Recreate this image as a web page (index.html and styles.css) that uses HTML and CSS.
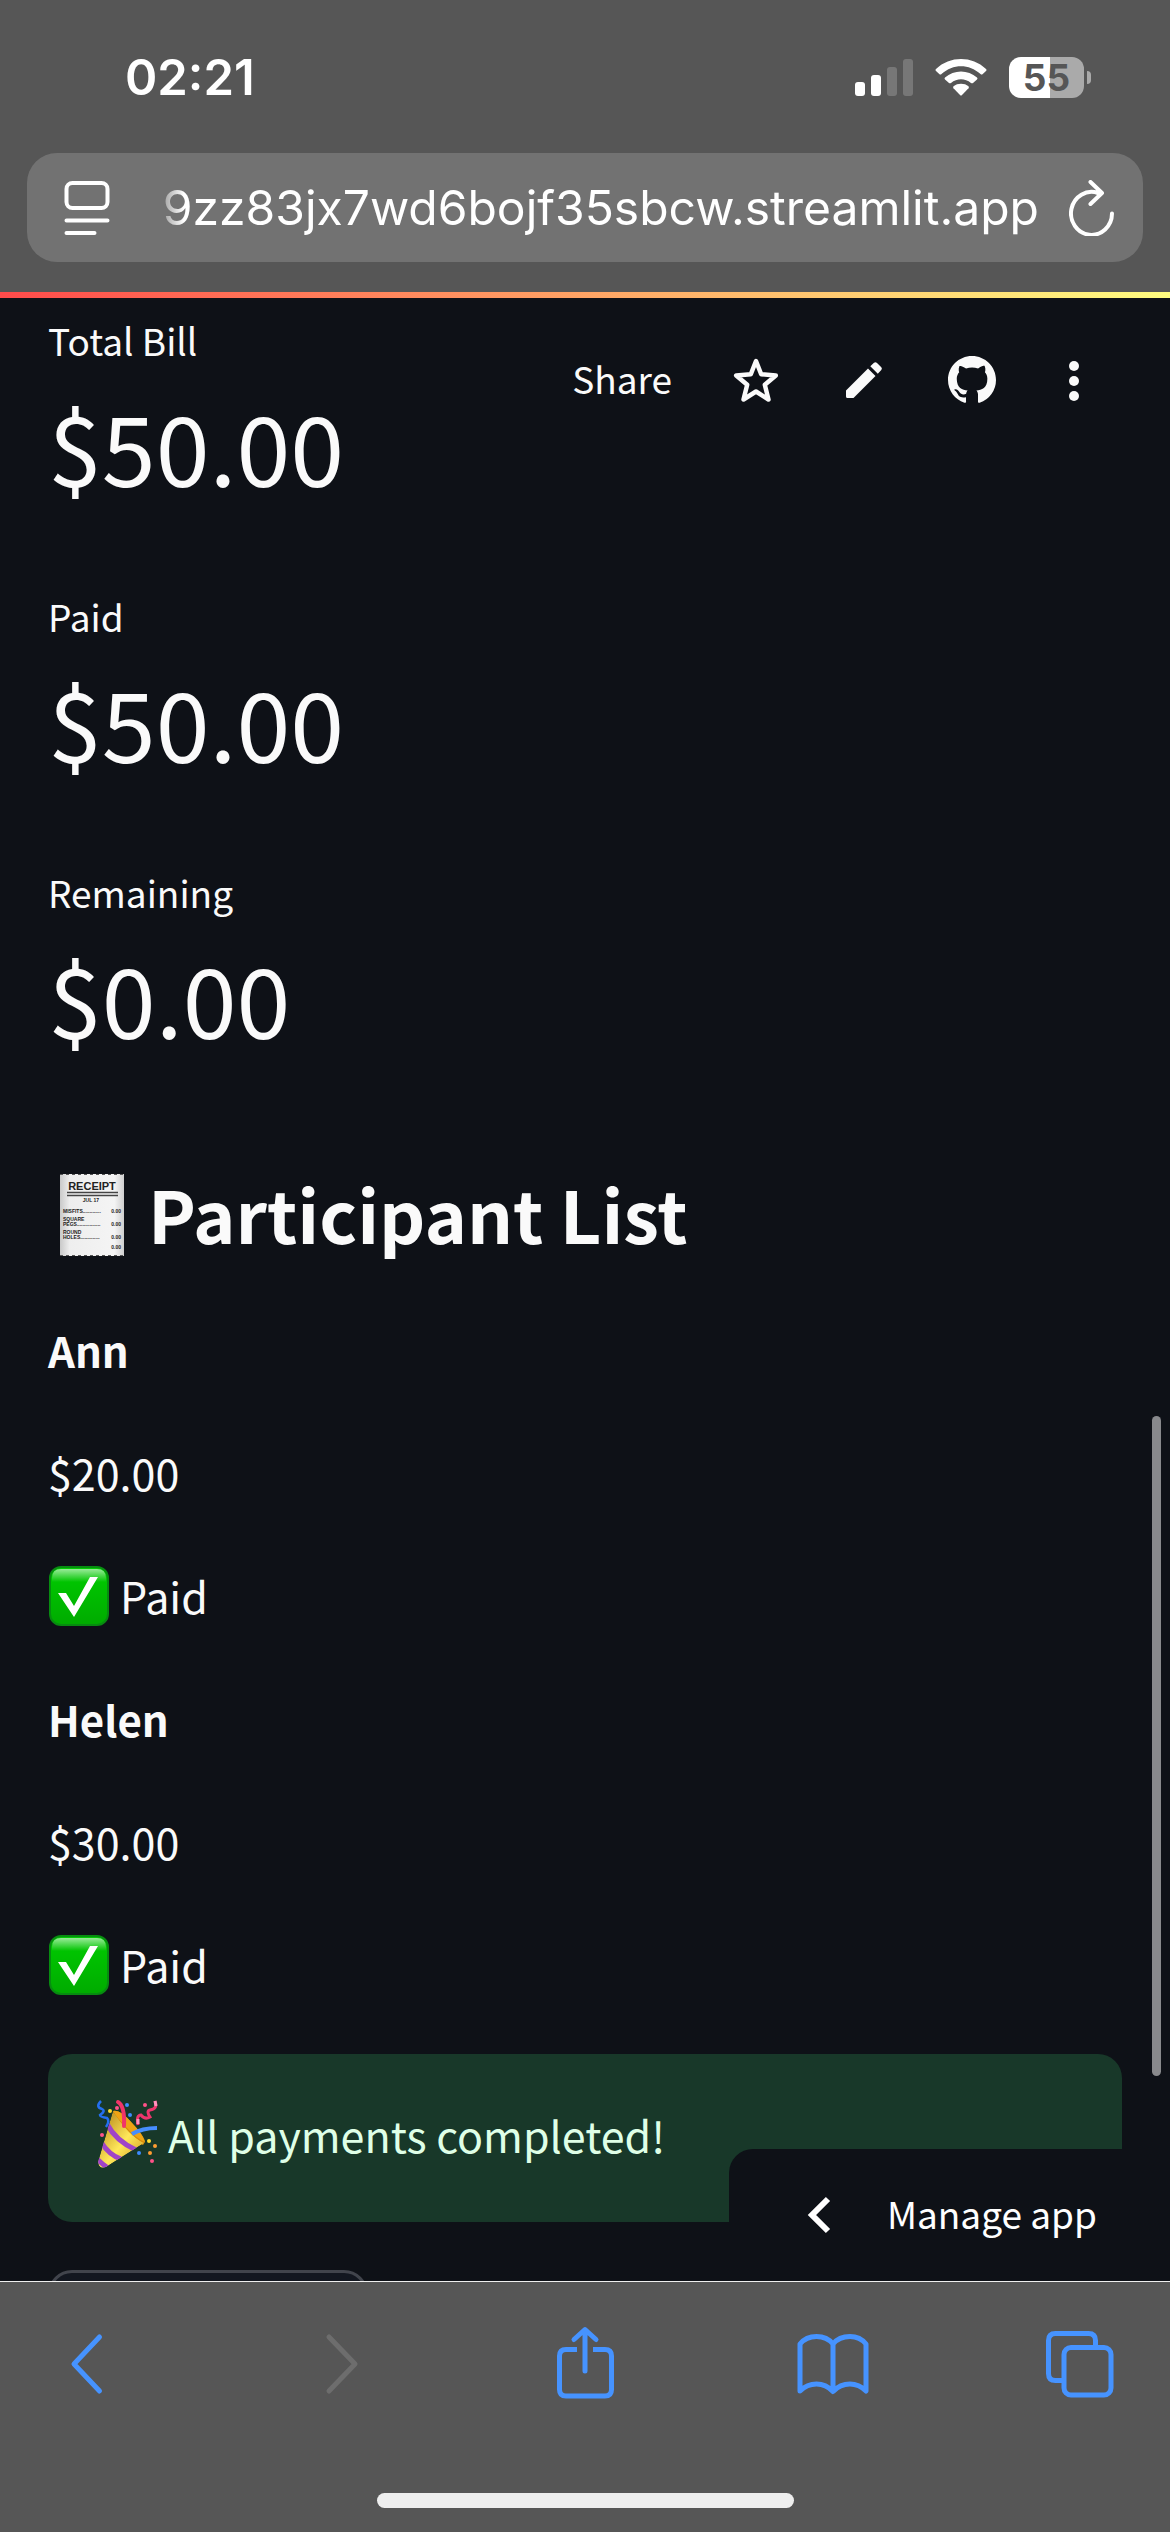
FILE: index.html
```html
<!DOCTYPE html>
<html lang="en">
<head>
<meta charset="utf-8">
<meta name="viewport" content="width=device-width, initial-scale=1">
<title>Bill Splitter</title>
<link rel="stylesheet" href="styles.css">
</head>
<body>
<header class="chrome-top">
  <div class="status">
    <time class="clock">02:21</time>
    <div class="status-icons">
      <svg width="58" height="42" viewBox="0 0 58 42" fill="#fff" role="img" aria-label="Signal">
        <rect x="0" y="25" width="10" height="14" rx="3"/>
        <rect x="16" y="18" width="10" height="21" rx="3"/>
        <g fill="#777"><rect x="32" y="10" width="10" height="29" rx="3"/><rect x="48" y="2" width="10" height="37" rx="3"/></g>
      </svg>
      <svg width="52" height="42" viewBox="0 0 52 42" fill="#fff" role="img" aria-label="Wi-Fi">
        <path d="M1 12C15 -1.300 37 -1.300 51 12Q52 13 51 14L47.500 17.200Q46.500 18 45.500 17C34 6.500 18 6.500 6.500 17Q5.500 18 4.500 17.200L1 14Q0 13 1 12Z"/>
        <path d="M10 20.500C19 12.500 33 12.500 42 20.500Q43 21.500 42 22.500L38 26Q37 26.700 36 25.900C30 21 22 21 16 25.900Q15 26.700 14 26L10 22.500Q9 21.500 10 20.500Z"/>
        <path d="M18.500 29.300C22.500 26 29.500 26 33.500 29.300Q34.400 30.200 33.500 31.200L27 38Q26 39 25 38L18.500 31.200Q17.600 30.200 18.500 29.300Z"/>
      </svg>
      <div class="battery"><span class="battery-level">55</span></div>
    </div>
  </div>
  <div class="address">
    <button class="icon-btn" aria-label="Page settings">
      <svg width="46" height="56" viewBox="0 0 46 56" fill="none" stroke="#fff" stroke-width="4" stroke-linecap="round">
        <rect x="2.500" y="3" width="41" height="25" rx="6"/><path d="M2.500 40.500H43.500M2.500 53H30.500"/>
      </svg>
    </button>
    <input class="url" type="text" aria-label="Address" value="9zz83jx7wd6bojf35sbcw.streamlit.app">
    <button class="icon-btn" aria-label="Reload">
      <svg width="46" height="56" viewBox="0 0 46 56" fill="none" stroke="#fff" stroke-width="4" stroke-linecap="round" stroke-linejoin="round">
        <path d="M43 33.500A20.500 21.500 0 1 1 29 13L33 13M21.500 2L33 13L21.500 24"/>
      </svg>
    </button>
  </div>
</header>

<div class="app">
  <div class="rainbow"></div>
  <nav class="toolbar" aria-label="App toolbar">
    <button class="share">Share</button>
    <button class="icon-btn" aria-label="Favorite">
      <svg width="48" height="48" viewBox="0 0 48 48" fill="none" stroke="#fafafa" stroke-width="4.500" stroke-linejoin="round">
        <path d="M24 5L29.200 18.300L43.800 19.500L32.800 28.800L36.500 43.500L24 35.500L11.500 43.500L15.200 28.800L4.200 19.500L18.800 18.300Z"/>
      </svg>
    </button>
    <button class="icon-btn" aria-label="Edit">
      <svg width="48" height="48" viewBox="0 0 48 48" fill="#fafafa">
        <path d="M6 34.500L28 12.500L35.500 20L13.500 42H7.500Q6 42 6 40.500ZM30.300 10.200L34 6.800Q35.500 5.600 37 6.900L41.300 11.200Q42.500 12.500 41.300 14L37.800 17.700Z"/>
      </svg>
    </button>
    <button class="icon-btn" aria-label="View source on GitHub">
      <svg width="48" height="48" viewBox="0 0 16 16" fill="#fafafa">
        <path d="M8 0C3.580 0 0 3.580 0 8c0 3.540 2.290 6.530 5.470 7.590.4.070.55-.17.55-.38 0-.19-.01-.82-.01-1.490-2.010.37-2.530-.49-2.690-.94-.09-.23-.48-.94-.82-1.130-.28-.15-.68-.52-.01-.53.63-.01 1.080.58 1.230.82.72 1.210 1.870.87 2.330.66.070-.52.28-.87.51-1.070-1.780-.2-3.640-.89-3.640-3.950 0-.87.31-1.590.82-2.150-.08-.2-.36-1.020.08-2.120 0 0 .67-.21 2.200.82.64-.18 1.320-.27 2-.27s1.360.09 2 .27c1.530-1.040 2.200-.82 2.200-.82.44 1.100.16 1.920.08 2.120.51.56.82 1.270.82 2.150 0 3.070-1.870 3.750-3.650 3.950.29.25.54.73.54 1.480 0 1.070-.01 1.930-.01 2.200 0 .21.15.46.55.38A8.010 8.010 0 0016 8c0-4.420-3.580-8-8-8z"/>
      </svg>
    </button>
    <button class="icon-btn" aria-label="More options">
      <svg width="36" height="48" viewBox="0 0 36 48" fill="#fafafa"><circle cx="18" cy="10" r="5"/><circle cx="18" cy="25" r="5"/><circle cx="18" cy="40" r="5"/></svg>
    </button>
  </nav>

  <main class="content">
    <dl class="metrics">
      <div><dt class="metric-label">Total Bill</dt><dd class="metric-value">$50.00</dd></div>
      <div><dt class="metric-label">Paid</dt><dd class="metric-value">$50.00</dd></div>
      <div><dt class="metric-label">Remaining</dt><dd class="metric-value">$0.00</dd></div>
    </dl>

    <h2 class="heading">
      <svg class="receipt" width="86" height="84" viewBox="0 0 86 84" role="img" aria-label="Receipt">
        <defs><linearGradient id="paper" x1="0" x2="1"><stop offset="0" stop-color="#c9c9c9"/><stop offset=".15" stop-color="#eee"/><stop offset=".85" stop-color="#f4f4f4"/><stop offset="1" stop-color="#cfcfcf"/></linearGradient></defs>
        <rect x="12" y="1" width="64" height="82" fill="url(#paper)"/>
        <path d="M12 1.500H76M12 82.500H76" stroke="#555" stroke-dasharray="3 3"/>
        <path d="M19 19.500H70M19 22.500H70" stroke="#444" stroke-width="1.500"/>
        <g class="receipt-text">
          <text x="44" y="17" font-size="11" text-anchor="middle">RECEIPT</text>
          <text x="43" y="29" font-size="5" text-anchor="middle">JUL 17</text>
          <text x="15" y="40" font-size="5">MISFITS.............</text><text x="73" y="40" font-size="5" text-anchor="end">0.00</text>
          <text x="15" y="48" font-size="5">SQUARE</text>
          <text x="15" y="53" font-size="5">PEGS.................</text><text x="73" y="53" font-size="5" text-anchor="end">0.00</text>
          <text x="15" y="61" font-size="5">ROUND</text>
          <text x="15" y="66" font-size="5">HOLES..............</text><text x="73" y="66" font-size="5" text-anchor="end">0.00</text>
          <text x="73" y="76" font-size="5" text-anchor="end">0.00</text>
        </g>
      </svg>
      Participant List
    </h2>

    <p class="name">Ann</p>
    <p>$20.00</p>
    <p class="with-icon">
      <svg width="62" height="62" viewBox="0 0 62 62" role="img" aria-label="Done">
        <defs>
          <linearGradient id="green" x1="0" y1="0" x2="0" y2="1"><stop offset="0" stop-color="#0c0"/><stop offset="1" stop-color="#00ab00"/></linearGradient>
          <linearGradient id="shine" x1="0" y1="0" x2="0" y2="1"><stop offset="0" stop-color="#fff" stop-opacity=".6"/><stop offset="1" stop-color="#fff" stop-opacity="0"/></linearGradient>
        </defs>
        <rect x="2" y="2" width="58" height="58" rx="11" fill="url(#green)" stroke="#078c10" stroke-width="2"/>
        <path d="M4 17V13Q4 4 13 4H49Q58 4 58 13V17Z" fill="url(#shine)"/>
        <path d="M10 28H18L26 41L42 12H50L26 52Z" fill="#fff"/>
      </svg>
      Paid
    </p>
    <p class="name">Helen</p>
    <p>$30.00</p>
    <p class="with-icon">
      <svg width="62" height="62" viewBox="0 0 62 62" role="img" aria-label="Done">
        <rect x="2" y="2" width="58" height="58" rx="11" fill="url(#green)" stroke="#078c10" stroke-width="2"/>
        <path d="M4 17V13Q4 4 13 4H49Q58 4 58 13V17Z" fill="url(#shine)"/>
        <path d="M10 28H18L26 41L42 12H50L26 52Z" fill="#fff"/>
      </svg>
      Paid
    </p>

    <div class="alert with-icon" role="alert">
      <svg width="62" height="70" viewBox="0 0 62 70" fill="none" role="img" aria-label="Celebration">
        <defs>
          <linearGradient id="cone" x1="0" y1="0" x2="1" y2="1"><stop offset=".1" stop-color="#b98a1c"/><stop offset=".55" stop-color="#ffe85a"/><stop offset="1" stop-color="#c98e16"/></linearGradient>
          <clipPath id="coneShape"><path d="M17 12L2 63Q3 71 10 68L48 44Q33 37 17 12Z"/></clipPath>
        </defs>
        <path d="M17 12Q24 10 36 24Q49 38 49 43L47 46Q30 40 17 12Z" fill="#d88c0b"/>
        <g clip-path="url(#coneShape)">
          <path d="M17 12L2 63Q3 71 10 68L48 44Q33 37 17 12Z" fill="url(#cone)"/>
          <path d="M11 25Q20 42 40 51M5 43Q13 56 25 60M0 59Q6 65 12 69" stroke="#a044c8" stroke-width="5"/>
        </g>
        <path d="M17 12Q24 10 36 24Q46 34 49 43Q41 40 31 29Q22 20 17 12Z" fill="#eea414"/>
        <path d="M22 3Q29 7 28 27" stroke="#f13468" stroke-width="4" stroke-linecap="round"/>
        <path d="M36 35Q46 29 61 29" stroke="#468eff" stroke-width="4"/>
        <path d="M5 2Q-1 8 6 10Q10 12 4 16Q4 18 11 19Q14 22 10 28" stroke="#246ff0" stroke-width="2.500"/>
        <path d="M59 2Q62 10 54 11Q50 12 54 18Q49 21 45 16Q40 16 42 26" stroke="#ed356d" stroke-width="3"/>
        <path d="M59 2L60 7M42 20V25" stroke="#ff92bd" stroke-width="3"/>
        <g fill="#ff5288"><circle cx="21" cy="9" r="2"/><circle cx="49" cy="6" r="2"/><circle cx="6" cy="36" r="2"/><circle cx="56" cy="62" r="2"/></g>
        <g fill="#3d8bff"><circle cx="31" cy="6" r="2"/><circle cx="34" cy="16" r="2"/><circle cx="43" cy="54" r="2"/></g>
        <g fill="#ffde32"><circle cx="14" cy="12" r="2"/><circle cx="53" cy="42" r="2"/></g>
        <g fill="#ff9c32"><circle cx="59" cy="47" r="2"/><circle cx="54" cy="54" r="2"/></g>
      </svg>
      All payments completed!
    </div>
    <button class="action" aria-label="Reset"></button>
  </main>

  <div class="scrollbar"></div>
  <button class="manage">
    <svg width="24" height="38" viewBox="0 0 24 38" fill="none" stroke="#fff" stroke-width="6"><path d="M21 3L5 19L21 35"/></svg>
    <span class="manage-label">Manage app</span>
  </button>
</div>

<footer class="chrome-bottom">
  <nav class="browser-nav" aria-label="Browser">
    <button class="icon-btn" aria-label="Back">
      <svg width="72" height="76" viewBox="0 0 72 76"><path d="M45.500 11L20 38L45.500 65"/></svg>
    </button>
    <button class="icon-btn" aria-label="Forward" disabled>
      <svg width="72" height="76" viewBox="0 0 72 76"><path d="M27 11L53 38L27 65"/></svg>
    </button>
    <button class="icon-btn" aria-label="Share page">
      <svg width="72" height="76" viewBox="0 0 72 76"><path d="M36 45V4M25 13.500L36 3.500L47 13.500"/><path stroke-linecap="butt" d="M28 23.500H17Q10.500 23.500 10.500 30V63.500Q10.500 70 17 70H56Q62.500 70 62.500 63.500V30Q62.500 23.500 56 23.500H44"/></svg>
    </button>
    <button class="icon-btn" aria-label="Bookmarks">
      <svg width="72" height="76" viewBox="0 0 72 76"><path d="M36 18Q30 10.500 19.500 10.500Q9 10.500 3 18V65Q10 58 19.500 58Q29 58 36 65.500Q43 58 53 58Q62 58 69 65V18Q63 10.500 53 10.500Q42 10.500 36 18V65"/></svg>
    </button>
    <button class="icon-btn" aria-label="Tabs">
      <svg width="72" height="76" viewBox="0 0 72 76"><rect x="20" y="21.500" width="47" height="47.500" rx="7"/><path stroke-linecap="butt" d="M51.500 21V14.500Q51.500 7.500 44.500 7.500H11.500Q4.500 7.500 4.500 14.500V47.500Q4.500 54.500 11.500 54.500H19"/></svg>
    </button>
  </nav>
  <div class="home-bar"></div>
</footer>
</body>
</html>
```
FILE: styles.css
```css
* { box-sizing: border-box; margin: 0; }

body {
  display: flex;
  flex-direction: column;
  height: 100vh;
  background: #0e1117;
  color: #fafafa;
  font: 400 43px/75px "Noto Sans CJK SC", sans-serif;
}

button, input {
  padding: 0;
  border: 0;
  background: none;
  color: inherit;
  font: inherit;
}

svg { display: block; flex: none; }
.icon-btn { display: flex; flex: none; }

/* Browser top bar */
.chrome-top {
  flex: none;
  padding: 57px 27px 30px;
  background: #565656;
  color: #fff;
  font-family: Inter, sans-serif;
}

.status {
  display: flex;
  justify-content: space-between;
  height: 42px;
  padding: 0 59px 0 98px;
}

.clock { font-size: 49px; font-weight: 600; line-height: 42px; }
.status-icons { display: flex; gap: 22px; }

.battery {
  position: relative;
  width: 75px;
  height: 41px;
  border-radius: 12px;
  background: linear-gradient(90deg, #fff 55%, #aaa 55%);
  color: #565656;
  text-align: center;
}

.battery::after {
  content: "";
  position: absolute;
  top: 14px;
  left: 78px;
  width: 4px;
  height: 13px;
  border-radius: 0 4px 4px 0;
  background: #aaa;
}

.battery-level { display: block; font-size: 37px; font-weight: 700; line-height: 41px; }

.address {
  display: flex;
  align-items: center;
  gap: 30px;
  height: 109px;
  margin-top: 54px;
  padding: 0 28px 0 37px;
  border-radius: 30px;
  background: #727272;
}

.url {
  flex: 1;
  min-width: 0;
  height: 72px;
  margin-left: 12px;
  font-size: 48px;
  text-align: right;
  -webkit-mask-image: linear-gradient(90deg, transparent, #000 32px);
  mask-image: linear-gradient(90deg, transparent, #000 32px);
}

/* App viewport */
.app {
  position: relative;
  flex: 1;
  min-height: 0;
  overflow: hidden;
}

.rainbow { height: 6px; background: linear-gradient(90deg, #ff4b4b, #fffd80); }

.toolbar {
  position: absolute;
  top: 64px;
  right: 78px;
  display: flex;
  align-items: center;
  gap: 60px;
}

.share { padding-bottom: 4px; font-size: 37px; line-height: 44px; }

.content {
  display: flex;
  flex-direction: column;
  gap: 48px;
  padding: 11px 48px 0;
}

.metrics { display: flex; flex-direction: column; gap: 66px; }
.metric-label { font-size: 37px; line-height: 62px; }
.metric-value { font-size: 97px; line-height: 148px; }

.heading {
  display: flex;
  align-items: center;
  gap: 14px;
  margin: 49px 0 6px;
  font-size: 72px;
  font-weight: 700;
  line-height: 90px;
}

.receipt { margin-top: 4px; }
.receipt-text { fill: #222; font-family: "Liberation Sans", sans-serif; font-weight: 700; }
.name { font-size: 42px; font-weight: 700; }
.with-icon { display: flex; align-items: center; gap: 10px; }

.alert {
  margin-top: 4px;
  padding: 44px 48px 52px;
  border-radius: 24px;
  background: #183829;
  color: #dfffe7;
  line-height: 72px;
}

.action {
  width: 320px;
  height: 120px;
  border: 3px solid #41444c;
  border-radius: 24px;
  background: #131720;
}

.scrollbar {
  position: absolute;
  top: 1124px;
  right: 9px;
  width: 9px;
  height: 660px;
  border-radius: 5px;
  background: #88898c;
}

.manage {
  position: absolute;
  right: 0;
  bottom: 0;
  display: flex;
  align-items: center;
  gap: 56px;
  height: 132px;
  padding: 0 73px 0 78px;
  border-radius: 24px 0 0;
  background: #0e1117;
  color: #fff;
  font-size: 37px;
  line-height: 60px;
}

.manage-label { padding-bottom: 5px; }

/* Browser bottom bar */
.chrome-bottom {
  flex: none;
  padding: 44px 54px 24px;
  border-top: 1px solid #eee;
  background: #565656;
}

.browser-nav { display: flex; justify-content: space-between; }

.browser-nav svg {
  fill: none;
  stroke: #4693ff;
  stroke-width: 5;
  stroke-linecap: round;
  stroke-linejoin: round;
}

.browser-nav :disabled svg { stroke: #6d6d6d; }

.home-bar {
  width: 417px;
  height: 15px;
  margin: 91px auto 0;
  border-radius: 8px;
  background: #eee;
}
```
